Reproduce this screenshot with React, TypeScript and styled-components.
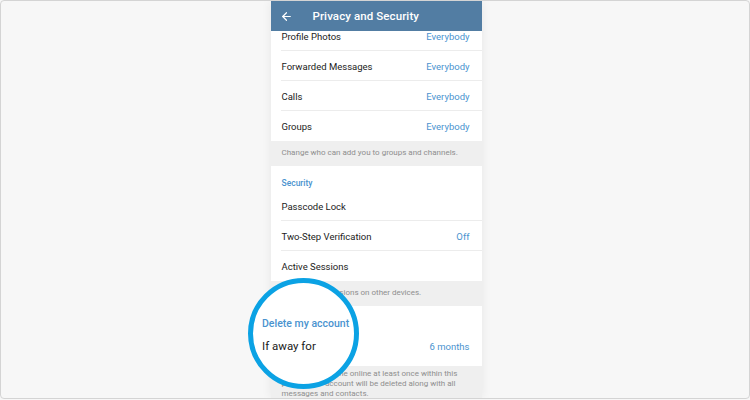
import React from 'react';
import styled, { createGlobalStyle } from 'styled-components';
import { ArrowLeft } from 'lucide-react';

const GlobalStyle = createGlobalStyle`
  body {
    margin: 0;
    background: #f7f7f7;
    font-family: Roboto, "Liberation Sans", sans-serif;
  }
`;

const Frame = styled.div`
  position: relative;
  width: 750px;
  height: 399px;
  box-sizing: border-box;
  border: 1px solid #d4d4d4;
  border-radius: 4px;
  background: #f7f7f7;
  display: flex;
  justify-content: center;
  overflow: hidden;
`;

const Phone = styled.div`
  width: 211px;
  margin-left: 2px;
  height: 100%;
  background: #efefef;
  box-shadow: 0 0 10px rgba(0, 0, 0, 0.07);
  display: flex;
  flex-direction: column;
  overflow: hidden;
`;

const Header = styled.div`
  flex: 0 0 30px;
  background: #527da3;
  display: flex;
  align-items: center;
  gap: 20px;
  padding-left: 9px;
  color: #fff;
  position: relative;
  z-index: 1;
`;

const Title = styled.div`
  font-size: 11.5px;
  font-weight: 500;
  letter-spacing: 0.1px;
`;

const Scroll = styled.div`
  flex: 1;
  overflow: hidden;
`;

const Inner = styled.div`
  margin-top: -10px;
`;

const Section = styled.div<{ $pb?: number }>`
  background: #fff;
  padding-bottom: ${(p) => p.$pb ?? 0}px;
`;

const SectionTitle = styled.div`
  height: 25px;
  box-sizing: border-box;
  padding: 12px 11px 0;
  font-size: 8.5px;
  font-weight: 500;
  color: #4a93cf;
`;

const Row = styled.div<{ $last?: boolean }>`
  position: relative;
  height: 30px;
  padding: 0 12px 0 11px;
  display: flex;
  align-items: center;
  justify-content: space-between;
  font-size: 9.5px;
  color: #222;

  &::after {
    content: '';
    display: ${(p) => (p.$last ? 'none' : 'block')};
    position: absolute;
    left: 10px;
    right: 0;
    bottom: 0;
    height: 1px;
    background: #ececec;
  }
`;

const Value = styled.span`
  color: #4a93cf;
`;

const Footer = styled.div<{ $pt?: number }>`
  padding: ${(p) => p.$pt ?? 7}px 12px 8px 11px;
  font-size: 8px;
  line-height: 10px;
  color: #8e8e8e;
`;

const Magnifier = styled.div`
  position: absolute;
  left: 247px;
  top: 277px;
  width: 111px;
  height: 111px;
  box-sizing: border-box;
  border: 5px solid #0ba2e4;
  border-radius: 50%;
  background: #fff;
  z-index: 2;
`;

const MagTitle = styled.div`
  position: absolute;
  left: 9px;
  top: 34px;
  font-size: 10.5px;
  font-weight: 500;
  color: #4a93cf;
  white-space: nowrap;
`;

const MagLabel = styled.div`
  position: absolute;
  left: 9px;
  top: 56px;
  font-size: 11.5px;
  color: #1a1a1a;
  white-space: nowrap;
`;

const App = () => {
  return (
    <>
      <GlobalStyle />
      <Frame>
        <Phone>
          <Header>
            <ArrowLeft size={13} strokeWidth={2.2} />
            <Title>Privacy and Security</Title>
          </Header>
          <Scroll>
            <Inner>
              <Section>
                <Row>
                  Profile Photos<Value>Everybody</Value>
                </Row>
                <Row>
                  Forwarded Messages<Value>Everybody</Value>
                </Row>
                <Row>
                  Calls<Value>Everybody</Value>
                </Row>
                <Row $last>
                  Groups<Value>Everybody</Value>
                </Row>
              </Section>
              <Footer>Change who can add you to groups and channels.</Footer>
              <Section>
                <SectionTitle>Security</SectionTitle>
                <Row>Passcode Lock</Row>
                <Row>
                  Two-Step Verification<Value>Off</Value>
                </Row>
                <Row $last>Active Sessions</Row>
              </Section>
              <Footer>Control your sessions on other devices.</Footer>
              <Section $pb={5}>
                <SectionTitle>Delete my account</SectionTitle>
                <Row $last>
                  If away for<Value>6 months</Value>
                </Row>
              </Section>
              <Footer $pt={3}>
                If you do not come online at least once within this period, your account will be deleted along with all messages and contacts.
              </Footer>
            </Inner>
          </Scroll>
        </Phone>
        <Magnifier>
          <MagTitle>Delete my account</MagTitle>
          <MagLabel>If away for</MagLabel>
        </Magnifier>
      </Frame>
    </>
  );
};

export default App;
